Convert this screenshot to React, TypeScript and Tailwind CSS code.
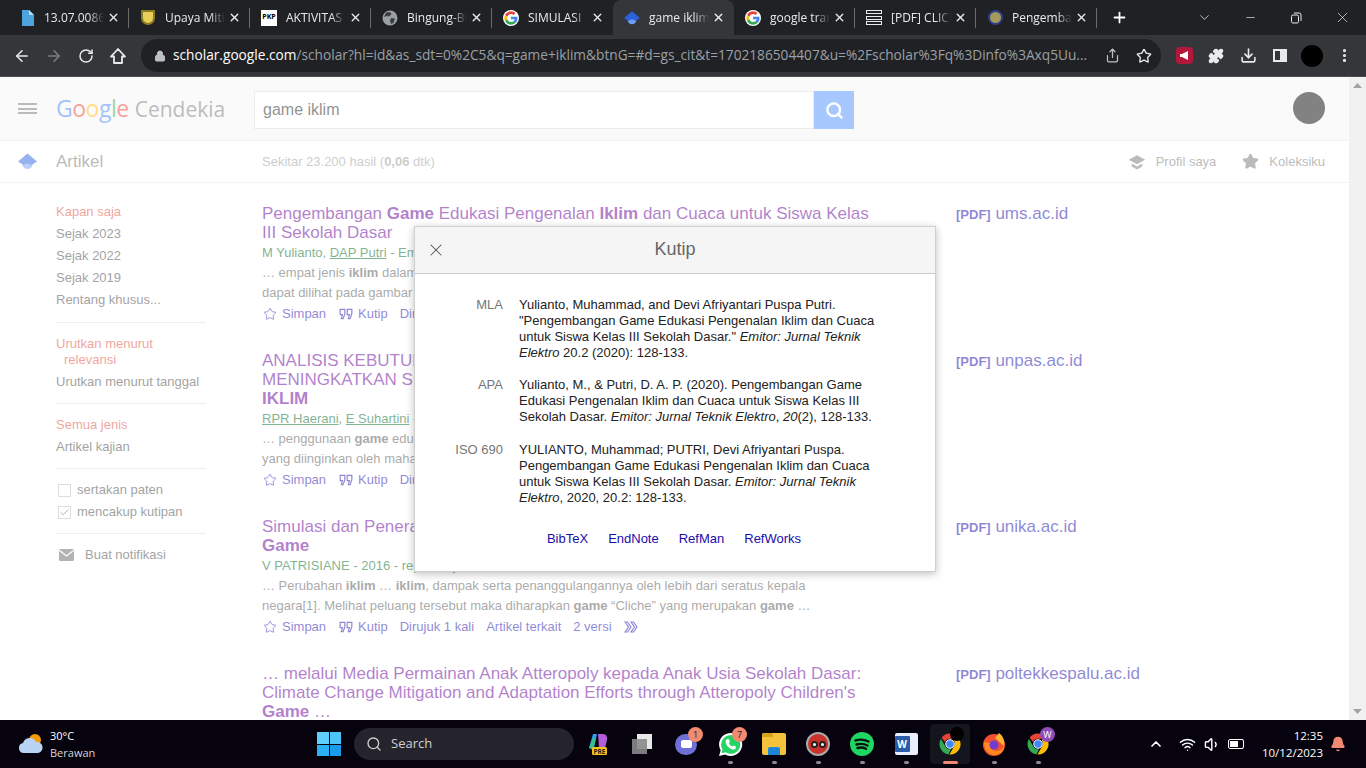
import React from 'react';
import {
  ArrowLeft, ArrowRight, RotateCw, Lock, Share, Star, Download, X, Plus, ChevronDown, Minus,
  EllipsisVertical, Wifi, Volume1, Bell, ChevronUp, Search, Check, Puzzle,
} from 'lucide-react';

const GoogleIcon = ({ size = 16 }: { size?: number }) => (
  <svg width={size} height={size} viewBox="0 0 48 48">
    <circle cx="24" cy="24" r="24" fill="#fff" />
    <path fill="#ea4335" d="M24 12c3 0 5.600 1 7.700 3l5.700-5.700C33.900 6.100 29.400 4 24 4 16.200 4 9.500 8.500 6.200 15l6.700 5.200C14.500 15.400 18.900 12 24 12z" />
    <path fill="#4285f4" d="M43.500 24.500c0-1.400-.1-2.700-.4-4H24v7.600h11c-.5 2.500-1.900 4.600-4 6l6.400 5c3.800-3.500 6.100-8.600 6.100-14.600z" />
    <path fill="#fbbc05" d="M12.900 28.800c-.4-1.200-.7-2.500-.7-3.800s.2-2.600.7-3.800L6.200 16C4.800 18.700 4 21.700 4 25s.8 6.300 2.200 9l6.700-5.200z" />
    <path fill="#34a853" d="M24 44c5.400 0 9.900-1.800 13.400-4.900l-6.400-5c-1.800 1.200-4.100 1.900-7 1.900-5.100 0-9.500-3.400-11.100-8.200L6.200 33C9.500 39.500 16.200 44 24 44z" />
  </svg>
);

const ChromeIcon = ({ size = 24 }: { size?: number }) => (
  <svg width={size} height={size} viewBox="0 0 48 48">
    <path fill="#ea4335" d="M24 3a21 21 0 0 1 18.200 10.500H24a10.500 10.500 0 0 0-9.800 6.800L7.300 11A21 21 0 0 1 24 3z" />
    <path fill="#34a853" d="M5.800 13.500 15 29.300a10.500 10.500 0 0 0 11 5.100L20.700 44.800A21 21 0 0 1 5.800 13.500z" />
    <path fill="#fbbc05" d="M42.200 13.500A21 21 0 0 1 22.800 45l9.500-16.300a10.500 10.500 0 0 0-1-12.200z" />
    <circle cx="24" cy="24" r="8.500" fill="#4285f4" stroke="#fff" strokeWidth="2" />
  </svg>
);

// rhombus cap with the round head under it
const ScholarHat = ({ size = 16, dark = false }: { size?: number; dark?: boolean }) => (
  <svg width={size} height={size} viewBox="0 0 24 24">
    <circle cx="12" cy="15" r="6.500" fill={dark ? '#6f9ef5' : '#a8c7fa'} />
    <path fill={dark ? '#2a62dc' : '#5f94ee'} d="M12 2 24 12l-7 4.500a7 7 0 0 0-10 0L0 12z" />
  </svg>
);

const Tab = ({ icon, title, active, fade }: { icon: React.ReactNode; title: string; active?: boolean; fade?: boolean }) => (
  <div className={`flex h-[35px] w-[121px] shrink-0 items-center pl-[11px] ${active ? 'rounded-t-lg bg-[#35363a]' : ''}`}>
    <span className="flex w-[16px] shrink-0 items-center justify-center">{icon}</span>
    <span className="ml-[9px] w-[60px] overflow-hidden whitespace-nowrap text-[12px] text-[#e8eaed] [mask-image:linear-gradient(to_right,black_75%,transparent)]">{title}</span>
    <X size={13} strokeWidth={2.5} className="ml-[3px] shrink-0 text-[#e8eaed]" />
    {!active && !fade && <span className="ml-[8px] h-[20px] w-px shrink-0 bg-[#6b6c6f]" />}
  </div>
);

const Titlebar = () => (
  <div className="flex h-[35px] items-center bg-[#202124] pl-[8px] font-['Open_Sans',sans-serif]">
    <Tab title="13.07.0086" icon={
      <svg width="13" height="16" viewBox="0 0 13 16"><path fill="#4fa3dd" d="M1 0h7l5 5v11H1z" /><path fill="#b5dcf5" d="M8 0l5 5H8z" /></svg>
    } />
    <Tab title="Upaya Mitigasi" icon={<span className="h-[15px] w-[14px] rounded-b-full rounded-t-[5px] border-2 border-[#8d7a25] bg-[#e8cf57]" />} />
    <Tab title="AKTIVITAS" icon={<span className="flex h-[16px] w-[16px] items-center justify-center bg-white text-[7px] font-bold text-black">PKP</span>} />
    <Tab title="Bingung-Bingung" icon={
      <svg width="16" height="16" viewBox="0 0 16 16"><circle cx="8" cy="8" r="7.500" fill="#9aa0a6" /><path fill="#3c3d40" d="M4 2.500 8 2l1.500 2L7 6.500 4.500 6 2 7zM9 8l4 .5-1.500 4.500-2.500 1L8 10.500z" /></svg>
    } />
    <Tab title="SIMULASI" icon={<GoogleIcon />} fade />
    <Tab title="game iklim" icon={<ScholarHat dark />} active />
    <Tab title="google translate" icon={<GoogleIcon />} />
    <Tab title="[PDF] CLICHE" icon={<span className="flex h-[15px] w-[16px] flex-col justify-between"><span className="h-[4px] border border-[#e8eaed]" /><span className="h-[4px] border border-[#e8eaed]" /><span className="h-[4px] border border-[#e8eaed]" /></span>} />
    <Tab title="Pengembangan" icon={<span className="h-[15px] w-[15px] rounded-full border-2 border-[#2f3f8f] bg-[#a49a5c]" />} />
    <Plus size={17} strokeWidth={2.5} className="ml-[14px] text-white" />
    <div className="ml-auto flex items-center text-[#e8eaed]">
      <ChevronDown size={15} strokeWidth={1.25} className="mr-[32px]" />
      <Minus size={13} strokeWidth={1.25} className="mr-[33px]" />
      <svg width="12" height="12" viewBox="0 0 12 12" fill="none" stroke="currentColor" className="mr-[32px]"><rect x="1.500" y="3" width="7" height="8" rx="1.500" /><path d="M4 1h5a2 2 0 0 1 2 2v6" /></svg>
      <X size={17} strokeWidth={1} className="mr-[15px]" />
    </div>
  </div>
);

const ToolIcon = ({ children }: { children: React.ReactNode }) => (
  <span className="flex w-[32px] shrink-0 items-center justify-center">{children}</span>
);

const Toolbar = () => (
  <div className="flex h-[42px] items-center border-b border-[#4a4b4f] bg-[#35363a] pl-[13px] text-[#e8eaed]">
    <ArrowLeft size={18} strokeWidth={2} />
    <ArrowRight size={18} strokeWidth={2} className="ml-[14px] text-[#7d7e81]" />
    <RotateCw size={16} strokeWidth={2.25} className="ml-[15px]" />
    <svg width="18" height="18" viewBox="0 0 18 18" fill="none" stroke="currentColor" strokeWidth="1.800" strokeLinejoin="round" className="ml-[15px]">
      <path d="M9 2 2 9.500h3V16h8V9.500h3z" />
    </svg>
    <div className="ml-[14px] flex h-[33px] w-[1020px] shrink-0 items-center rounded-full bg-[#202124] pl-[13px] pr-[9px] font-['Open_Sans',sans-serif]">
      <Lock size={12} fill="#bdc1c6" className="shrink-0 text-[#bdc1c6]" />
      <div className="ml-[7px] w-[925px] shrink-0 overflow-hidden whitespace-nowrap text-[13.7px] text-[#9aa0a6]">
        <span className="text-white">scholar.google.com</span>/scholar?hl=id&as_sdt=0%2C5&q=game+iklim&btnG=#d=gs_cit&t=1702186504407&u=%2Fscholar%3Fq%3Dinfo%3Axq5Uu...
      </div>
      <Share size={15} className="ml-[7px] shrink-0 text-[#bdc1c6]" />
      <Star size={16} strokeWidth={2} className="ml-[16px] shrink-0" />
    </div>
    <div className="ml-[7px] flex">
      <ToolIcon>
        <span className="flex h-[17px] w-[17px] items-center justify-center rounded-[4px] bg-[#b3173a]">
          <svg width="11" height="11" viewBox="0 0 11 11" fill="#fff"><path d="M1 4h2l6-3v9L3 7H1z" /></svg>
        </span>
      </ToolIcon>
      <ToolIcon><Puzzle size={16} fill="#e8eaed" /></ToolIcon>
      <ToolIcon><Download size={17} strokeWidth={2.25} /></ToolIcon>
      <ToolIcon><span className="h-[13px] w-[14px] border-2 border-[#e8eaed] [background:linear-gradient(to_right,transparent_50%,#e8eaed_50%)]" /></ToolIcon>
      <ToolIcon><span className="h-[22px] w-[22px] rounded-full bg-black" /></ToolIcon>
      <ToolIcon><EllipsisVertical size={17} strokeWidth={2.5} /></ToolIcon>
    </div>
  </div>
);

const QuoteIcon = () => (
  <svg width="14" height="14" viewBox="0 0 24 24" fill="none" stroke="#1a0dab" strokeWidth="2">
    <path d="M2 4h8v8l-3 8H4l2-7H2zM14 4h8v8l-3 8h-3l2-7h-4z" />
  </svg>
);

const MoreIcon = () => (
  <svg width="15" height="12" viewBox="0 0 15 12" fill="none" stroke="#1a0dab" strokeWidth="1.200">
    <path d="M1 1h2.500L7 6l-3.500 5H1l3.500-5zM7 1h2.500L13 6l-3.500 5H7l3.500-5z" />
  </svg>
);

const Actions = () => (
  <div className="flex h-[20px] items-center whitespace-nowrap pt-[2px] text-[13px] text-[#1a0dab]">
    <Star size={14} strokeWidth={1.5} className="ml-px" />
    <span className="ml-[5px]">Simpan</span>
    <span className="ml-[13px]"><QuoteIcon /></span>
    <span className="ml-[5px]">Kutip</span>
    <span className="ml-[12px]">Dirujuk 1 kali</span>
    <span className="ml-[12px]">Artikel terkait</span>
    <span className="ml-[12px]">2 versi</span>
    <span className="ml-[12px]"><MoreIcon /></span>
  </div>
);

const Result = ({ lines, authors, snippet, site }: { lines: React.ReactNode[]; authors?: React.ReactNode; snippet?: React.ReactNode[]; site: string }) => (
  <div className="flex">
    <div className="w-[694px] shrink-0 pb-[28px]">
      <div className="mb-px w-[640px] whitespace-nowrap text-[17px] leading-[19px] text-[#660099]">
        {lines.map((l, i) => <div key={i}>{l}</div>)}
      </div>
      <div className="h-[20px] whitespace-nowrap text-[13px] leading-[20px] text-[#006621]">{authors}</div>
      {snippet && (
        <div className="whitespace-nowrap text-[13px] leading-[20px] text-[#545454]">
          {snippet.map((l, i) => <div key={i}>{l}</div>)}
        </div>
      )}
      {snippet && <Actions />}
    </div>
    <div className="whitespace-nowrap text-[17px] leading-[19px] text-[#1a0dab]"><span className="text-[13px] font-bold">[PDF]</span> {site}</div>
  </div>
);

const Side = ({ children, red }: { children: React.ReactNode; red?: boolean }) => (
  <div className={`text-[13px] leading-[22px] whitespace-nowrap ${red ? 'text-[#dd4b39]' : 'text-[#444]'}`}>{children}</div>
);

const Divider = () => <div className="mb-[10px] mt-[10px] border-t border-[#ddd]" />;

const Sidebar = () => (
  <div className="ml-[56px] w-[150px] shrink-0 pt-[18px]">
    <div className="pb-px">
      <Side red>Kapan saja</Side>
      <Side>Sejak 2023</Side>
      <Side>Sejak 2022</Side>
      <Side>Sejak 2019</Side>
      <Side>Rentang khusus...</Side>
    </div>
    <Divider />
    <div className="pb-[3px] pt-[3px] text-[13px] leading-[16px] text-[#dd4b39]">Urutkan menurut<br /><span className="ml-[8px]">relevansi</span></div>
    <Side>Urutkan menurut tanggal</Side>
    <Divider />
    <Side red>Semua jenis</Side>
    <Side>Artikel kajian</Side>
    <Divider />
    <div className="flex h-[22px] items-center text-[13px] text-[#444]"><span className="ml-[2px] mr-[6px] h-[13px] w-[13px] border border-[#bbb]" />sertakan paten</div>
    <div className="flex h-[22px] items-center text-[13px] text-[#444]"><span className="ml-[2px] mr-[6px] flex h-[13px] w-[13px] items-center justify-center border border-[#bbb]"><Check size={13} className="text-[#555]" /></span>mencakup kutipan</div>
    <Divider />
    <div className="flex h-[22px] items-center text-[13px] text-[#444]">
      <svg width="15" height="12" viewBox="0 0 15 12" className="ml-[3px] mr-[11px]"><rect width="15" height="12" rx="1.500" fill="#666" /><path d="M.5 1.500 7.500 7l7-5.500" fill="none" stroke="#fff" strokeWidth="1.300" /></svg>
      Buat notifikasi
    </div>
  </div>
);

const Cite = ({ label, children }: { label: string; children: React.ReactNode }) => (
  <div className="flex">
    <div className="w-[88px] shrink-0 text-right text-[#777]">{label}</div>
    <div className="ml-[16px] w-[360px] text-[#222]">{children}</div>
  </div>
);

const CiteDialog = () => (
  <div className="absolute left-[414px] top-[149px] z-10 h-[346px] w-[522px] border border-[#cfcfcf] bg-white font-['Liberation_Sans',sans-serif] shadow-[0_2px_8px_rgba(0,0,0,0.25)]">
    <div className="relative flex h-[47px] items-center justify-center border-b border-[#ccc] bg-[#f5f5f5] pb-[2px] text-[18px] text-[#666]">
      <X size={20} strokeWidth={1.25} className="absolute left-[11px] top-[13px] text-[#555]" />
      Kutip
    </div>
    <div className="pt-[23px] text-[13px] leading-[16px]">
      <Cite label="MLA">Yulianto, Muhammad, and Devi Afriyantari Puspa Putri. "Pengembangan Game Edukasi Pengenalan Iklim dan Cuaca untuk Siswa Kelas III Sekolah Dasar." <i>Emitor: Jurnal Teknik Elektro</i> 20.2 (2020): 128-133.</Cite>
      <div className="h-[16px]" />
      <Cite label="APA">Yulianto, M., & Putri, D. A. P. (2020). Pengembangan Game Edukasi Pengenalan Iklim dan Cuaca untuk Siswa Kelas III Sekolah Dasar. <i>Emitor: Jurnal Teknik Elektro</i>, <i>20</i>(2), 128-133.</Cite>
      <div className="h-[17px]" />
      <Cite label="ISO 690">YULIANTO, Muhammad; PUTRI, Devi Afriyantari Puspa. Pengembangan Game Edukasi Pengenalan Iklim dan Cuaca untuk Siswa Kelas III Sekolah Dasar. <i>Emitor: Jurnal Teknik Elektro</i>, 2020, 20.2: 128-133.</Cite>
    </div>
    <div className="mt-[23px] flex justify-center gap-[20px] pr-[2px] text-[13px] text-[#1a0dab]">
      <span>BibTeX</span><span>EndNote</span><span>RefMan</span><span>RefWorks</span>
    </div>
  </div>
);

const Page = () => (
  <div className="flex min-h-0 flex-1">
    <div className="relative min-w-0 flex-1 overflow-hidden bg-white font-['Liberation_Sans',sans-serif]">
      {/* Header */}
      <div className="flex h-[64px] items-center border-b border-[#e5e5e5] bg-[#f5f5f5]">
        <div className="ml-[18px] flex h-[11px] w-[19px] flex-col justify-between">
          <span className="h-[2px] bg-[#777]" /><span className="h-[2px] bg-[#777]" /><span className="h-[2px] bg-[#777]" />
        </div>
        <div className="ml-[19px] w-[198px] whitespace-nowrap font-['Open_Sans',sans-serif] text-[23px] leading-none tracking-[-0.5px]">
          <span className="text-[#4285f4]">G</span><span className="text-[#ea4335]">o</span><span className="text-[#fbbc05]">o</span><span className="text-[#4285f4]">g</span><span className="text-[#34a853]">l</span><span className="text-[#ea4335]">e</span>
          <span className="ml-[6px] text-[21px] tracking-normal text-[#777]">Cendekia</span>
        </div>
        <div className="mt-[3px] flex h-[38px] w-[600px]">
          <div className="flex flex-1 items-center border border-[#d9d9d9] bg-white pl-[8px] text-[16px] text-[#222]">game iklim</div>
          <div className="flex w-[40px] items-center justify-center bg-[#4d90fe]"><Search size={19} strokeWidth={3} className="text-white" /></div>
        </div>
        <span className="mb-[2px] ml-auto mr-[24px] h-[32px] w-[32px] rounded-full bg-[#050505]" />
      </div>
      {/* Sub header */}
      <div className="flex h-[42px] items-center border-b border-[#e5e5e5]">
        <span className="ml-[18px]"><ScholarHat size={19} dark /></span>
        <span className="ml-[19px] w-[206px] text-[17px] text-[#777]">Artikel</span>
        <span className="text-[13px] text-[#999]">Sekitar 23.200 hasil (<b>0,06</b> dtk)</span>
        <div className="ml-auto mr-[24px] flex items-center text-[13px] text-[#777]">
          <svg width="18" height="18" viewBox="0 0 24 24" fill="#777"><path d="M12 3 1 9l11 6 11-6zM5 14v4l7 4 7-4v-4l-7 4z" /></svg>
          <span className="ml-[10px]">Profil saya</span>
          <Star size={17} fill="#777" className="ml-[26px] text-[#777]" />
          <span className="ml-[10px]">Koleksiku</span>
        </div>
      </div>
      {/* Body */}
      <div className="flex">
        <Sidebar />
        <div className="ml-[56px] pt-[21px]">
          <Result
            lines={[<>Pengembangan <b>Game</b> Edukasi Pengenalan <b>Iklim</b> dan Cuaca untuk Siswa Kelas</>, 'III Sekolah Dasar']}
            authors={<>M Yulianto, <u>DAP Putri</u> - Emitor: Jurnal Teknik Elektro, 2020</>}
            snippet={[<>… empat jenis <b>iklim</b> dalam game edukasi yang</>, 'dapat dilihat pada gambar 1 berikut']}
            site="ums.ac.id"
          />
          <Result
            lines={['ANALISIS KEBUTUHAN MEDIA PEMBELAJARAN UNTUK', 'MENINGKATKAN SIKAP PEDULI LINGKUNGAN', <b>IKLIM</b>]}
            authors={<><u>RPR Haerani</u>, <u>E Suhartini</u> - Jurnal, 2022</>}
            snippet={[<>… penggunaan <b>game</b> edukasi sebagai media</>, 'yang diinginkan oleh mahasiswa']}
            site="unpas.ac.id"
          />
          <Result
            lines={['Simulasi dan Penerapan Perubahan Iklim', <b>Game</b>]}
            authors="V PATRISIANE - 2016 - repository.unika.ac.id"
            snippet={[<>… Perubahan <b>iklim</b> … <b>iklim</b>, dampak serta penanggulangannya oleh lebih dari seratus kepala</>, <>negara[1]. Melihat peluang tersebut maka diharapkan <b>game</b> “Cliche” yang merupakan <b>game</b> …</>]}
            site="unika.ac.id"
          />
          <Result
            lines={['… melalui Media Permainan Anak Atteropoly kepada Anak Usia Sekolah Dasar:', "Climate Change Mitigation and Adaptation Efforts through Atteropoly Children's", <><b>Game</b> …</>]}
            site="poltekkespalu.ac.id"
          />
        </div>
      </div>
      <div className="absolute inset-0 bg-white/50" />
      <CiteDialog />
    </div>
    {/* Scrollbar */}
    <div className="flex w-[17px] shrink-0 flex-col items-center justify-between bg-[#f1f1f1] py-[6px]">
      <svg width="9" height="5" viewBox="0 0 9 5" fill="#a3a3a3"><path d="M4.500 0 9 5H0z" /></svg>
      <svg width="9" height="5" viewBox="0 0 9 5" fill="#a3a3a3"><path d="M0 0h9L4.500 5z" /></svg>
    </div>
  </div>
);

const TaskIcon = ({ children, dot, active }: { children: React.ReactNode; dot?: boolean; active?: boolean }) => (
  <div className={`relative flex h-[40px] w-[40px] shrink-0 items-center justify-center rounded-[4px] ${active ? 'bg-[#15151d]' : ''}`}>
    {children}
    {dot && <span className={`absolute bottom-0 h-[3px] rounded-full ${active ? 'w-[15px] bg-[#f08a70]' : 'w-[5px] bg-[#8b8b8f]'}`} />}
  </div>
);

const Badge = ({ children, cls }: { children: React.ReactNode; cls: string }) => (
  <span className={`absolute right-[3px] top-[3px] flex h-[15px] w-[15px] items-center justify-center rounded-full text-[9px] text-[#222] ${cls}`}>{children}</span>
);

const Taskbar = () => (
  <div className="flex h-[48px] items-center bg-[#06030f] font-['Open_Sans',sans-serif] text-white">
    <div className="flex w-[317px] shrink-0 items-center pl-[18px]">
      <svg width="26" height="24" viewBox="0 0 26 24"><circle cx="17" cy="8" r="6" fill="#f59e0b" /><path fill="#b9d3f2" d="M6 21a5 5 0 0 1-1-9.900A7 7 0 0 1 18 10a5.500 5.500 0 0 1 2 11z" /></svg>
      <div className="ml-[6px] text-[11px] leading-[17px]">30°C<br /><span className="text-[#d5d5d5]">Berawan</span></div>
    </div>
    <div className="grid h-[24px] w-[24px] shrink-0 grid-cols-2 gap-px">
      <span className="bg-[#5fd0fb]" /><span className="bg-[#4cc4f8]" /><span className="bg-[#2bb0f2]" /><span className="bg-[#1a9bea]" />
    </div>
    <div className="ml-[13px] flex h-[32px] w-[220px] shrink-0 items-center rounded-full bg-[#25242c] pl-[12px] text-[13px] text-[#d0d0d0]">
      <Search size={16} strokeWidth={2} />
      <span className="ml-[9px]">Search</span>
    </div>
    <div className="ml-[4px] flex items-center gap-[4px]">
      <TaskIcon>
        <svg width="22" height="24" viewBox="0 0 22 24"><path fill="#2f9fe8" d="M6 2h4l-3 14H2z" /><path fill="#b05fd8" d="M11 2h5c3 0 5 3 4 6l-2 8h-6z" /><path fill="#35c08a" d="M2 16 6 6h3L6 18z" /><rect x="5" y="15" width="15" height="8" rx="1.500" fill="#f5c518" /><text x="12.500" y="22" textAnchor="middle" fontSize="6.500" fontWeight="700" fill="#222">PRE</text></svg>
      </TaskIcon>
      <TaskIcon>
        <span className="relative h-[20px] w-[20px]"><span className="absolute right-0 top-0 h-[15px] w-[15px] bg-[#e8e8e8]" /><span className="absolute bottom-0 left-0 h-[15px] w-[15px] bg-[#8a8a8a]/90" /></span>
      </TaskIcon>
      <TaskIcon>
        <span className="flex h-[21px] w-[22px] items-center justify-center rounded-full bg-[#6f6fd8]"><span className="h-[8px] w-[11px] rounded-[2px] bg-white" /></span>
        <Badge cls="bg-[#f08a70]">1</Badge>
      </TaskIcon>
      <TaskIcon dot>
        <svg width="25" height="25" viewBox="0 0 24 24"><path fill="#fff" d="M12 1a11 11 0 0 0-9.500 16.500L1 23l5.700-1.500A11 11 0 1 0 12 1z" /><path fill="#25d366" d="M12 3a9 9 0 0 0-7.700 13.600L3.500 20.500l3.900-1A9 9 0 1 0 12 3z" /><path fill="#fff" d="M8.500 7c-1 .5-1.500 2-1 3.500 1 3 3 5 6 6 1.500.5 3 0 3.500-1 .3-.7.2-1.200 0-1.500l-2-1-1 1c-1.500-.5-3-2-3.500-3.500l1-1-1-2.500z" /></svg>
        <Badge cls="bg-[#f08a70]">7</Badge>
      </TaskIcon>
      <TaskIcon dot>
        <span className="relative flex h-[22px] w-[24px] flex-col justify-end rounded-[2px] bg-[#f5c33b]"><span className="absolute left-0 top-0 h-[4px] w-[11px] rounded-t-[2px] bg-[#d9a21b]" /><span className="mx-auto h-[8px] w-[12px] rounded-t-[2px] bg-[#1d86d8]" /></span>
      </TaskIcon>
      <TaskIcon dot>
        <span className="relative flex h-[24px] w-[24px] items-center justify-center gap-px rounded-full border-2 border-[#aaa] bg-[#c8322a]"><span className="h-[7px] w-[7px] rounded-full border-2 border-[#222] bg-white" /><span className="h-[7px] w-[7px] rounded-full border-2 border-[#222] bg-white" /></span>
      </TaskIcon>
      <TaskIcon dot>
        <svg width="24" height="24" viewBox="0 0 24 24"><circle cx="12" cy="12" r="12" fill="#1ed760" /><path fill="none" stroke="#111" strokeLinecap="round" strokeWidth="2.400" d="M5.500 8.500c4-1.200 9-1 13 1M6.500 12.500c3.500-1 7.500-.7 11 1M7.500 16c3-.8 6-.6 8.500.8" /></svg>
      </TaskIcon>
      <TaskIcon dot>
        <span className="relative flex h-[22px] w-[23px] justify-end rounded-[2px] bg-[#e8eefb]"><span className="absolute left-0 top-[3px] flex h-[16px] w-[15px] items-center justify-center rounded-[1px] bg-[#2a5caa] text-[10px] font-bold text-white">W</span></span>
      </TaskIcon>
      <TaskIcon dot active>
        <ChromeIcon />
        <span className="absolute right-[6px] top-[3px] h-[14px] w-[14px] rounded-full bg-black" />
      </TaskIcon>
      <TaskIcon dot>
        <svg width="24" height="24" viewBox="0 0 24 24"><circle cx="12" cy="13" r="11" fill="#f2502f" /><path fill="#ffb52e" d="M17 1c4 3 6 8 5 13L13 6z" /><path fill="#ff8a1f" d="M2 10c0 6 3 12 10 13 6 0 10-4 10-9-2 4-5 5-8 5-4 0-7-4-6-8z" /><circle cx="12" cy="13" r="4.500" fill="#6f3bd0" /></svg>
      </TaskIcon>
      <TaskIcon dot>
        <ChromeIcon />
        <Badge cls="bg-[#8e4cb8] text-white">W</Badge>
      </TaskIcon>
    </div>
    <div className="ml-auto flex items-center">
      <ChevronUp size={16} strokeWidth={2.5} />
      <Wifi size={17} className="ml-[15px]" />
      <Volume1 size={17} className="ml-[8px]" />
      <span className="ml-[7px] flex h-[10px] w-[16px] items-center rounded-[2px] border border-white p-px"><span className="h-full w-[8px] bg-white" /></span>
      <div className="ml-[3px] w-[76px] text-right text-[11.5px] leading-[17px]">12:35<br />10/12/2023</div>
      <Bell size={16} fill="#f08a70" className="ml-[7px] mr-[20px] text-[#f08a70]" />
    </div>
  </div>
);

export default function App() {
  return (
    <div className="flex h-[768px] w-[1366px] flex-col overflow-hidden">
      <Titlebar />
      <Toolbar />
      <Page />
      <Taskbar />
    </div>
  );
}
